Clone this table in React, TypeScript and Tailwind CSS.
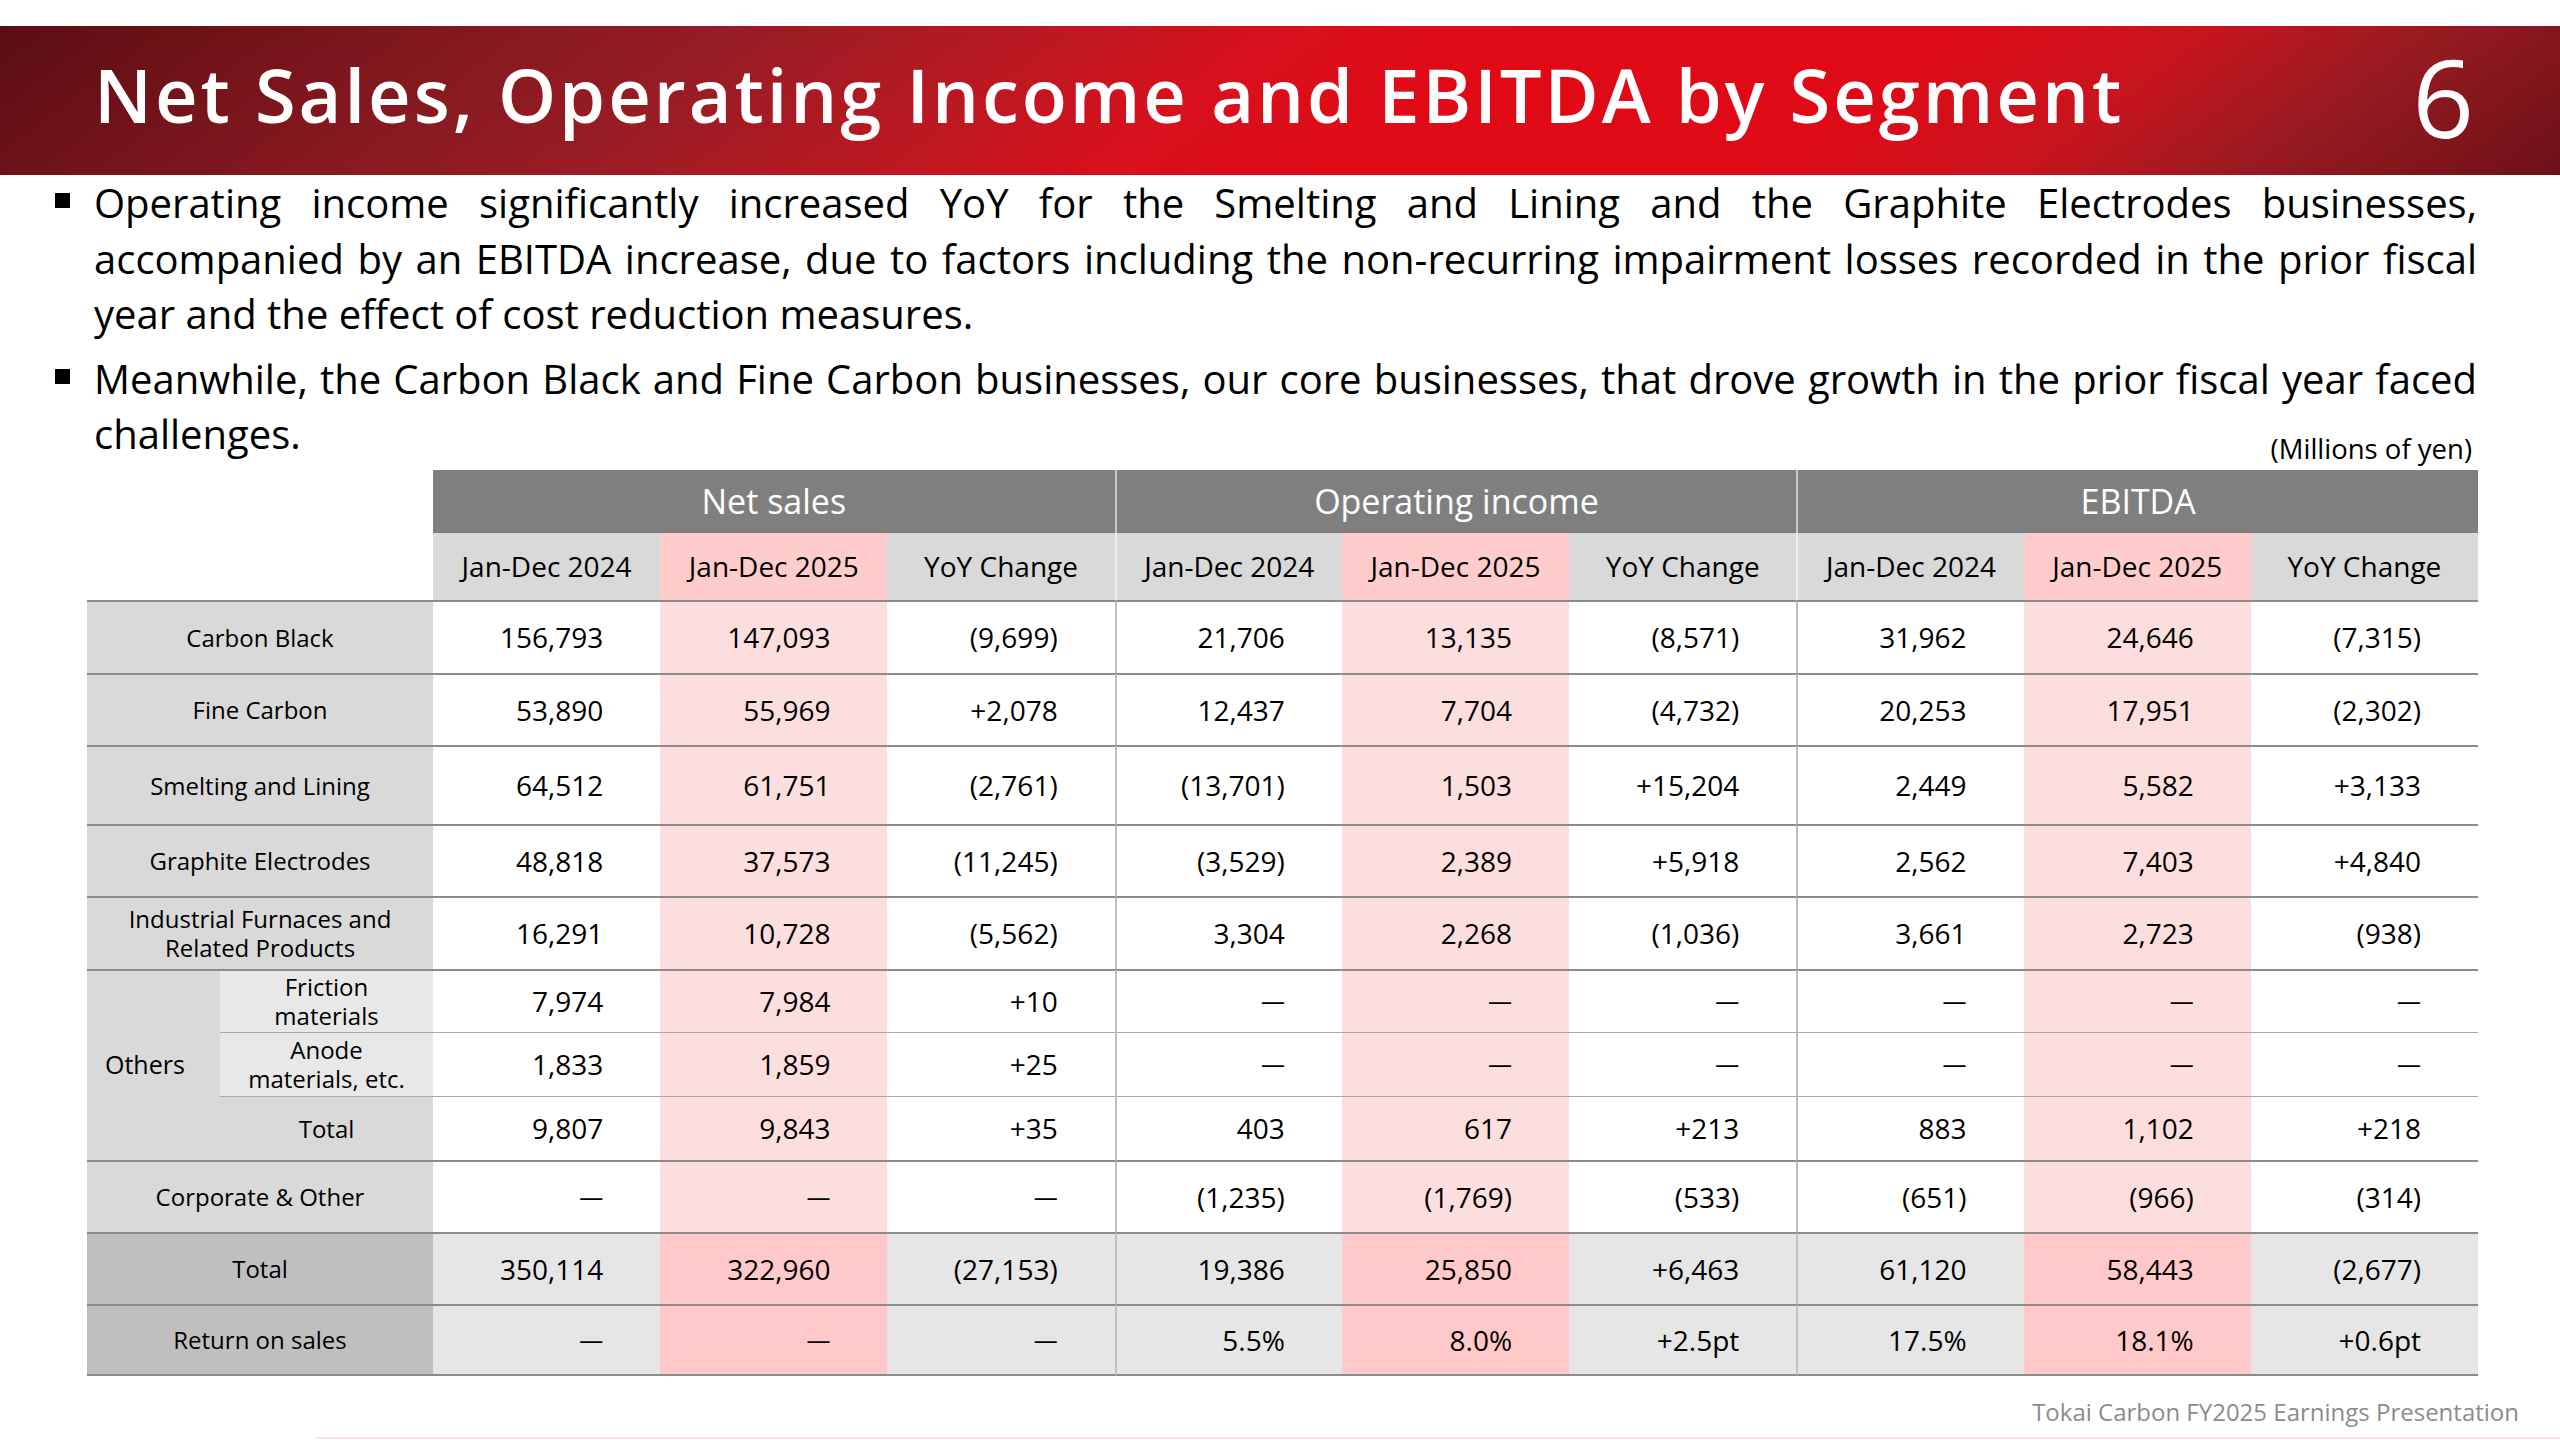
import React from "react";

type Row = {
  label: string[];
  v: string[];
  kind: "normal" | "dark";
};

const D = "—";

const mainRows: Row[] = [
  { label: ["Carbon Black"], kind: "normal", v: ["156,793", "147,093", "(9,699)", "21,706", "13,135", "(8,571)", "31,962", "24,646", "(7,315)"] },
  { label: ["Fine Carbon"], kind: "normal", v: ["53,890", "55,969", "+2,078", "12,437", "7,704", "(4,732)", "20,253", "17,951", "(2,302)"] },
  { label: ["Smelting and Lining"], kind: "normal", v: ["64,512", "61,751", "(2,761)", "(13,701)", "1,503", "+15,204", "2,449", "5,582", "+3,133"] },
  { label: ["Graphite Electrodes"], kind: "normal", v: ["48,818", "37,573", "(11,245)", "(3,529)", "2,389", "+5,918", "2,562", "7,403", "+4,840"] },
  { label: ["Industrial Furnaces and", "Related Products"], kind: "normal", v: ["16,291", "10,728", "(5,562)", "3,304", "2,268", "(1,036)", "3,661", "2,723", "(938)"] },
];

const otherRows: { label: string[]; v: string[]; light: boolean }[] = [
  { label: ["Friction", "materials"], light: true, v: ["7,974", "7,984", "+10", D, D, D, D, D, D] },
  { label: ["Anode", "materials, etc."], light: true, v: ["1,833", "1,859", "+25", D, D, D, D, D, D] },
  { label: ["Total"], light: false, v: ["9,807", "9,843", "+35", "403", "617", "+213", "883", "1,102", "+218"] },
];

const bottomRows: Row[] = [
  { label: ["Corporate & Other"], kind: "normal", v: [D, D, D, "(1,235)", "(1,769)", "(533)", "(651)", "(966)", "(314)"] },
  { label: ["Total"], kind: "dark", v: ["350,114", "322,960", "(27,153)", "19,386", "25,850", "+6,463", "61,120", "58,443", "(2,677)"] },
  { label: ["Return on sales"], kind: "dark", v: [D, D, D, "5.5%", "8.0%", "+2.5pt", "17.5%", "18.1%", "+0.6pt"] },
];

function dataBg(kind: "normal" | "dark", i: number) {
  if (kind === "dark") return i % 3 === 1 ? "bg-[#ffc9c9]" : "bg-[#e6e6e6]";
  return i % 3 === 1 ? "bg-[#fddede]" : "bg-white";
}

function sepL(i: number) {
  return i === 3 || i === 6 ? "border-l-2 border-l-[#c0c0c0]" : "";
}

function DataCells({ v, kind, top, last }: { v: string[]; kind: "normal" | "dark"; top: string; last?: boolean }) {
  return (
    <>
      {v.map((x, i) => (
        <div
          key={i}
          className={`flex items-center justify-end pr-[57px] text-[28px] ${dataBg(kind, i)} ${sepL(i)} ${top} ${last ? "border-b-2 border-b-[#8c8c8c]" : ""}`}
        >
          {x === D ? <span className="text-[24px]">{x}</span> : x}
        </div>
      ))}
    </>
  );
}

function Label({ lines, cls }: { lines: string[]; cls: string }) {
  return (
    <div className={`flex flex-col items-center justify-center text-center text-[24px] leading-[29px] ${cls}`}>
      {lines.map((l, i) => (
        <span key={i}>{l}</span>
      ))}
    </div>
  );
}

const TOP_MAIN = "border-t-2 border-t-[#8c8c8c]";
const TOP_SUB = "border-t border-t-[#a9a9a9]";

export default function App() {
  const sub = ["Jan-Dec 2024", "Jan-Dec 2025", "YoY Change"];
  return (
    <div className="w-[2560px] h-[1440px] bg-white overflow-hidden font-['Open_Sans',sans-serif] text-black">
      <div className="h-[26px]" />
      {/* title bar */}
      <div className="h-[149px] flex items-center justify-between pl-[94px] pr-[86px] pb-[12px] text-white bg-[linear-gradient(143deg,#5a0d14_0%,#731419_10%,#891a21_20%,#9c1c24_29%,#bd1822_39%,#d8101d_47%,#e00a17_55%,#e00916_70%,#c8141e_80%,#9a1a21_88%,#7e151b_95%,#6c1118_100%)]">
        <div className="text-[74px] leading-none font-semibold tracking-[0.04em] whitespace-nowrap">
          Net Sales, Operating Income and EBITDA by Segment
        </div>
        <div className="text-[108px] leading-none mt-[4px]">6</div>
      </div>

      {/* bullets */}
      <div className="pl-[55px] pr-[83px] text-[40px] leading-[55.5px]">
        <div className="flex">
          <div className="w-[39px] shrink-0">
            <div className="w-[15px] h-[15px] bg-black mt-[18px]" />
          </div>
          <div className="flex-1 min-w-0">
            <div className="text-justify [text-align-last:justify]">
              Operating income significantly increased YoY for the Smelting and Lining and the Graphite Electrodes businesses,
            </div>
            <div className="text-justify [text-align-last:justify]">
              accompanied by an EBITDA increase, due to factors including the non-recurring impairment losses recorded in the prior fiscal
            </div>
            <div>year and the effect of cost reduction measures.</div>
          </div>
        </div>
        <div className="flex mt-[9px]">
          <div className="w-[39px] shrink-0">
            <div className="w-[15px] h-[15px] bg-black mt-[18px]" />
          </div>
          <div className="flex-1 min-w-0">
            <div className="text-justify [text-align-last:justify]">
              Meanwhile, the Carbon Black and Fine Carbon businesses, our core businesses, that drove growth in the prior fiscal year faced
            </div>
            <div className="flex justify-between items-end">
              <span>challenges.</span>
              <span className="text-[27.5px] leading-[27px] pr-[5px]">(Millions of yen)</span>
            </div>
          </div>
        </div>
      </div>

      {/* table */}
      <div className="ml-[87px] mt-[8px] w-[2391px] grid grid-cols-[133px_213px_repeat(9,minmax(0,1fr))] grid-rows-[63px_67px_73px_72px_79px_72px_73px_63px_64px_64px_72px_72px_72px]">
        <div className="col-span-2 row-span-2" />
        <div className="col-span-3 bg-[#7f7f7f] text-white text-[34px] flex items-center justify-center">Net sales</div>
        <div className="col-span-3 bg-[#7f7f7f] text-white text-[34px] flex items-center justify-center border-l-2 border-l-[#c8c8c8]">Operating income</div>
        <div className="col-span-3 bg-[#7f7f7f] text-white text-[34px] flex items-center justify-center border-l-2 border-l-[#c8c8c8]">EBITDA</div>
        {[0, 1, 2, 3, 4, 5, 6, 7, 8].map((i) => (
          <div
            key={i}
            className={`flex items-center justify-center text-[28px] ${i % 3 === 1 ? "bg-[#ffcccc]" : "bg-[#d9d9d9]"} ${i === 3 || i === 6 ? "border-l-2 border-l-[#ededed]" : ""}`}
          >
            {sub[i % 3]}
          </div>
        ))}

        {mainRows.map((r, ri) => (
          <React.Fragment key={ri}>
            <Label lines={r.label} cls={`col-span-2 bg-[#d9d9d9] ${TOP_MAIN}`} />
            <DataCells v={r.v} kind="normal" top={TOP_MAIN} />
          </React.Fragment>
        ))}

        <div className={`row-span-3 bg-[#d9d9d9] ${TOP_MAIN} flex items-center pl-[18px] text-[25px]`}>Others</div>
        {otherRows.map((r, ri) => (
          <React.Fragment key={ri}>
            <Label
              lines={r.label}
              cls={`${r.light ? "bg-[#e8e8e8]" : "bg-[#d9d9d9]"} ${ri === 0 ? TOP_MAIN : TOP_SUB}`}
            />
            <DataCells v={r.v} kind="normal" top={ri === 0 ? TOP_MAIN : TOP_SUB} />
          </React.Fragment>
        ))}

        {bottomRows.map((r, ri) => (
          <React.Fragment key={ri}>
            <Label
              lines={r.label}
              cls={`col-span-2 ${r.kind === "dark" ? "bg-[#bfbfbf]" : "bg-[#d9d9d9]"} ${TOP_MAIN} ${ri === 2 ? "border-b-2 border-b-[#8c8c8c]" : ""}`}
            />
            <DataCells v={r.v} kind={r.kind} top={TOP_MAIN} last={ri === 2} />
          </React.Fragment>
        ))}
      </div>

      {/* footer */}
      <div className="flex justify-end pr-[41px] mt-[21px] text-[24px] leading-[30px] text-[#8c8c8c]">
        Tokai Carbon FY2025 Earnings Presentation
      </div>
      <div className="ml-[315px] mt-[10px] h-[2px] bg-[#fbe3e3]" />
    </div>
  );
}
